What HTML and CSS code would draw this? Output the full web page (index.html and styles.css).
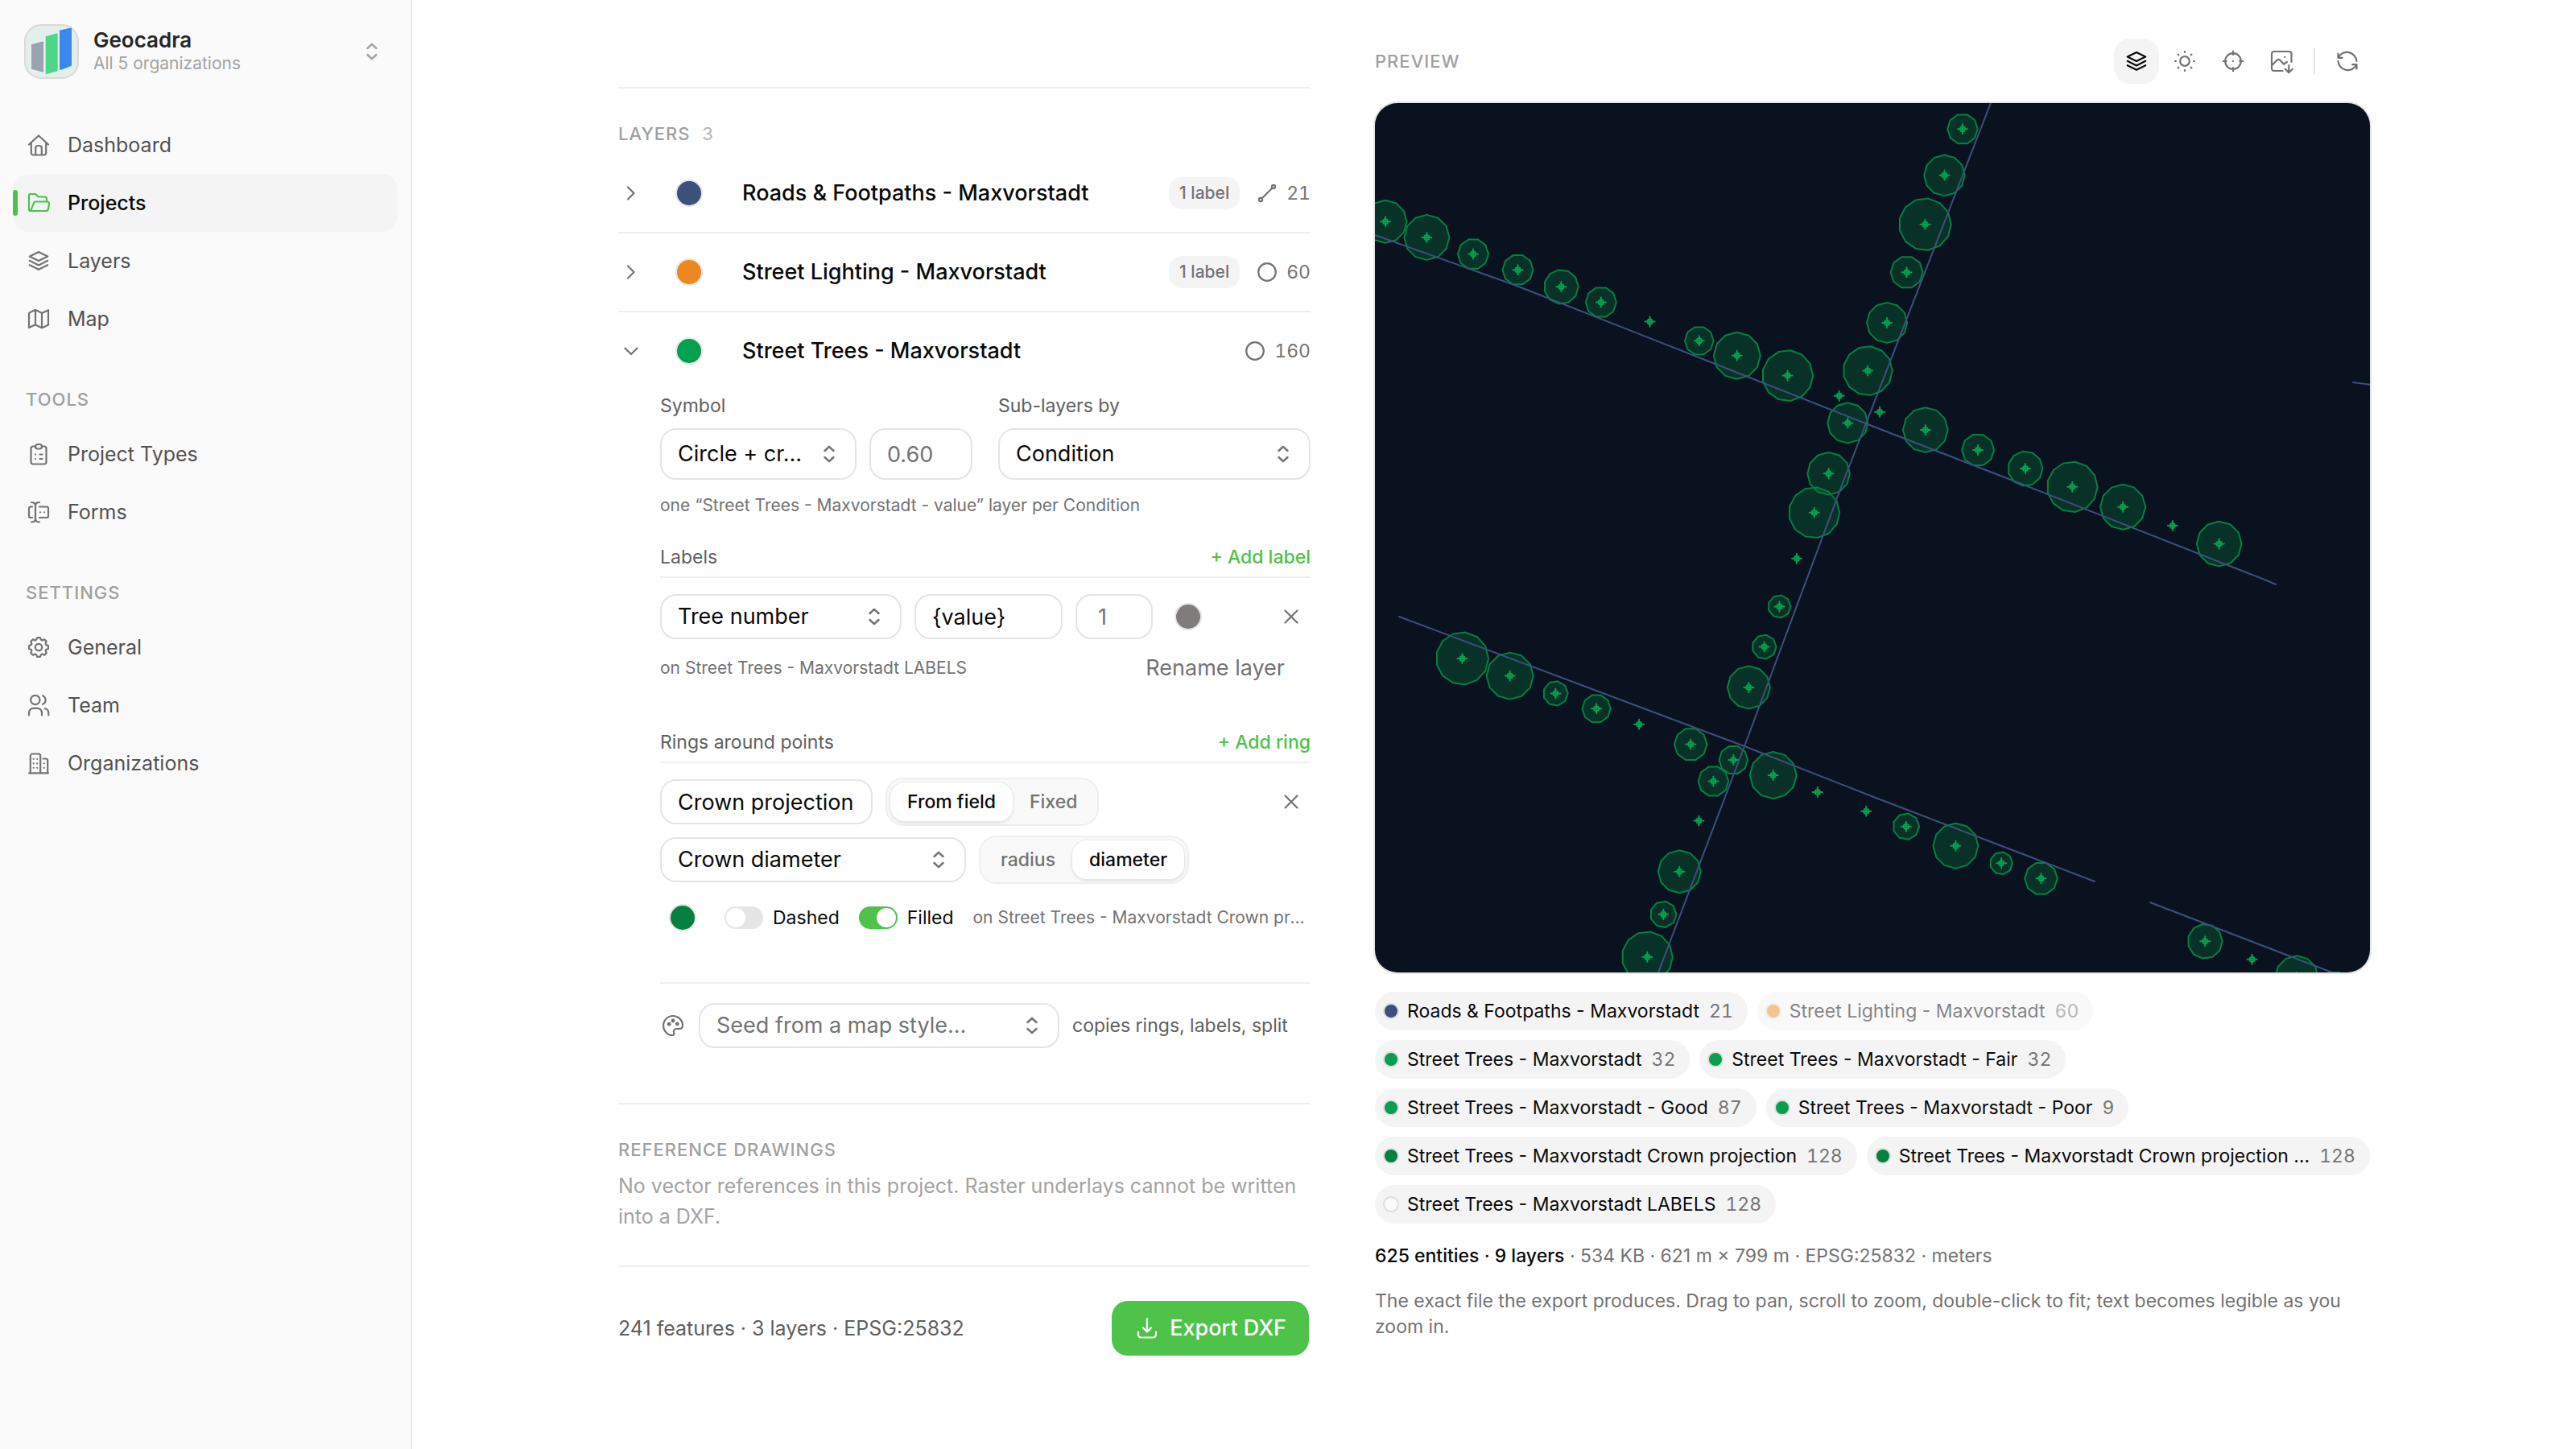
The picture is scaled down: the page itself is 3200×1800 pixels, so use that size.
FILE: index.html
```html
<!DOCTYPE html>
<html lang="en">
<head>
<meta charset="utf-8">
<meta name="viewport" content="width=device-width, initial-scale=1">
<title>Geocadra – Export DXF</title>
<link rel="stylesheet" href="styles.css">
</head>
<body>
<svg class="sprite" aria-hidden="true">
  <symbol id="updown" viewBox="0 0 24 24"><path d="M6.500 8 12 2.800 17.500 8M6.500 16 12 21.200 17.500 16"/></symbol>
  <symbol id="home" viewBox="0 0 32 32"><path d="M4 15.500 16 4.500 28 15.500M6.800 13.500V26a2.500 2.500 0 0 0 2.500 2.500h13.400a2.500 2.500 0 0 0 2.500-2.500V13.500M12.200 28.500V20a3 3 0 0 1 3-3h1.600a3 3 0 0 1 3 3v8.500"/></symbol>
  <symbol id="folder" viewBox="0 0 32 32"><path d="M6 26a2 2 0 0 1-2-2V7a2 2 0 0 1 2-2h5a3 3 0 0 1 2 .8L15.500 8.500H23a3 3 0 0 1 3 3v3M6.300 26 9.800 16.300A2.600 2.600 0 0 1 12.200 14.500H26.500a2.500 2.500 0 0 1 2.500 3l-1 6a3 3 0 0 1-3 2.500H6"/></symbol>
  <symbol id="layers" viewBox="0 0 32 32"><path d="M16 5 27.200 10.500 16 16 4.800 10.500ZM4.800 15.800 16 21.400 27.200 15.800M4.800 21.200 16 26.800 27.200 21.200"/></symbol>
  <symbol id="map" viewBox="0 0 32 32"><path d="M5 8.300 11 5.300a2 2 0 0 1 1.700 0l6.600 3.200a2 2 0 0 0 1.700 0L28 5.200V23.500L21 27a2 2 0 0 1-1.700 0l-6.600-3.200a2 2 0 0 0-1.700 0L4 27V9.500ZM12 5.500V23.500M20 8.800V27"/></symbol>
  <symbol id="clipboard" viewBox="0 0 32 32"><path d="M12 6.500H9A2.500 2.500 0 0 0 6.500 9v17A2.500 2.500 0 0 0 9 28.500h14A2.500 2.500 0 0 0 25.500 26V9A2.500 2.500 0 0 0 23 6.500h-3M17.500 16.500h3M17.500 22h3M12 16.500h.1M12 22h.1"/><rect x="12" y="4" width="8" height="5.500" rx="2.700"/></symbol>
  <symbol id="forms" viewBox="0 0 32 32"><path d="M7 4c3 0 5 1.500 5 4v16.500c0 2.500-2 4-5 4M17 4c-3 0-5 1.500-5 4M17 28.500c-3 0-5-1.500-5-4M8 9.500H6a2 2 0 0 0-2 2v9.500a2 2 0 0 0 2 2h2M17 9.500h9a2 2 0 0 1 2 2v9.500a2 2 0 0 1-2 2h-9M18 16.300h.1M23 16.300h.1"/></symbol>
  <symbol id="gear" viewBox="0 0 32 32"><path d="M27.900 17.900 25.200 19 24.600 20.400 25.700 23.100 23.100 25.700 20.400 24.600 19 25.200 17.900 27.900 14.100 27.900 13 25.200 11.600 24.600 8.900 25.700 6.300 23.100 7.400 20.400 6.800 19 4.100 17.900 4.100 14.100 6.800 13 7.400 11.600 6.300 8.900 8.900 6.300 11.600 7.400 13 6.800 14.100 4.100 17.900 4.100 19 6.800 20.400 7.400 23.100 6.300 25.700 8.900 24.600 11.600 25.200 13 27.900 14.100Z"/><circle cx="16" cy="16" r="4.200"/></symbol>
  <symbol id="team" viewBox="0 0 32 32"><circle cx="11.800" cy="9.500" r="5.700"/><path d="M21 4.200a5.700 5.700 0 0 1 0 10.600M4 28.500v-3.200a5.500 5.500 0 0 1 5.500-5.500h5a5.500 5.500 0 0 1 5.500 5.500v3.200M24 20.200a5.500 5.500 0 0 1 4.300 5.300v3"/></symbol>
  <symbol id="building" viewBox="0 0 32 32"><path d="M4 28.300h24M5.800 28V7a2.500 2.500 0 0 1 2.500-2.500h7.400a2.500 2.500 0 0 1 2.500 2.500V28M21.500 10.500h3.200A2.500 2.500 0 0 1 27.200 13v15M9.700 10.800h.1M14.100 10.800h.1M9.700 16.300h.1M14.100 16.300h.1M9.700 21.800h.1M14.100 21.800h.1M22.700 16.300h.1M22.700 21.800h.1"/></symbol>
  <symbol id="right" viewBox="0 0 32 32"><path d="M12 8.500 19.500 16 12 23.500"/></symbol>
  <symbol id="down" viewBox="0 0 32 32"><path d="M8.500 12.500 16 20l7.500-7.500"/></symbol>
  <symbol id="line" viewBox="0 0 32 32"><path d="M9.500 22.500 22.500 9.500"/><circle cx="8" cy="24" r="2.100"/><circle cx="24" cy="8" r="2.100"/></symbol>
  <symbol id="point" viewBox="0 0 32 32"><circle cx="16" cy="16" r="10.800"/></symbol>
  <symbol id="close" viewBox="0 0 32 32"><path d="M8.500 8.500l15 15M23.500 8.500l-15 15"/></symbol>
  <symbol id="palette" viewBox="0 0 32 32"><path d="M16 4A12 12 0 0 0 4 16c0 6.500 5 12 11.500 12 1.600 0 2.200-1.200 1.700-2.600-1-2.800.3-5.400 3.400-5.400h3.200c2.700 0 4.200-1.500 4.200-4C28 9 22.500 4 16 4Z"/><g class="filled"><circle cx="11.200" cy="14.200" r="2.400"/><circle cx="16" cy="10" r="2.400"/><circle cx="21.300" cy="13.800" r="2.400"/></g></symbol>
  <symbol id="sun" viewBox="0 0 32 32"><circle cx="16" cy="16" r="5.800"/><path d="M16 4v1M16 27v1M4 16h1M27 16h1M7.600 7.600l.7.700M23.700 23.700l.7.700M7.600 24.400l.7-.7M23.700 8.300l.7-.7"/></symbol>
  <symbol id="target" viewBox="0 0 32 32"><circle cx="16" cy="16" r="9.800"/><path d="M16 3.800v4M16 24.200v4M3.800 16h4M24.200 16h4M15.900 16h.2"/></symbol>
  <symbol id="image" viewBox="0 0 32 32"><path d="M17.500 28H7a3 3 0 0 1-3-3V7a3 3 0 0 1 3-3h18.500a3 3 0 0 1 3 3v10M4 21.500l6.500-6.700a2.600 2.600 0 0 1 3.800 0l5 5.200M19.300 19.500l3.700-2.500M20.300 10.800h.1M25.300 21v9M20.800 25.700l4.500 4.500 4.500-4.500"/></symbol>
  <symbol id="refresh" viewBox="0 0 32 32"><path d="M4.500 6.500v5.300h5.300M4.800 11.500A12 12 0 0 1 27.500 16M27.500 25.500v-5.300h-5.300M27.200 20.500A12 12 0 0 1 4.500 16"/></symbol>
  <symbol id="download" viewBox="0 0 32 32"><path d="M16 4v16M11 15.500l5 5 5-5M5 20.500V24a3.500 3.500 0 0 0 3.500 3.500h15A3.500 3.500 0 0 0 27 24v-3.500"/></symbol>
</svg>

<div class="app">
  <aside class="sidebar">
    <button class="brand" type="button">
      <svg class="logo" viewBox="0 0 68 68" aria-hidden="true">
        <rect x="1" y="1" width="66" height="66" rx="20" fill="#e4eeec" stroke="#dadada" stroke-width="2"/>
        <path fill="#9ba2b0" stroke="#9ba2b0" stroke-width="2" stroke-linejoin="round" d="M10 26 23 22.500V58.500L10 55Z"/>
        <path fill="#4fd586" stroke="#4fd586" stroke-width="2" stroke-linejoin="round" d="M27.700 16 40.700 12.500V57.500L27.700 61Z"/>
        <path fill="#3b88ec" stroke="#3b88ec" stroke-width="2" stroke-linejoin="round" d="M45 8.500 58 5.500V51L45 56Z"/>
      </svg>
      <span class="brand-text"><strong>Geocadra</strong><small>All 5 organizations</small></span>
      <svg class="icon-sm"><use href="#updown"/></svg>
    </button>
    <nav class="nav">
      <div class="nav-group">
        <a href="#dashboard"><svg class="icon"><use href="#home"/></svg>Dashboard</a>
        <a href="#projects" class="active" aria-current="page"><svg class="icon"><use href="#folder"/></svg>Projects</a>
        <a href="#layers-page"><svg class="icon"><use href="#layers"/></svg>Layers</a>
        <a href="#map-page"><svg class="icon"><use href="#map"/></svg>Map</a>
      </div>
      <div class="nav-group">
        <h2 class="eyebrow">TOOLS</h2>
        <a href="#types"><svg class="icon"><use href="#clipboard"/></svg>Project Types</a>
        <a href="#forms-page"><svg class="icon"><use href="#forms"/></svg>Forms</a>
      </div>
      <div class="nav-group">
        <h2 class="eyebrow">SETTINGS</h2>
        <a href="#general"><svg class="icon"><use href="#gear"/></svg>General</a>
        <a href="#team-page"><svg class="icon"><use href="#team"/></svg>Team</a>
        <a href="#organizations"><svg class="icon"><use href="#building"/></svg>Organizations</a>
      </div>
    </nav>
  </aside>

  <main class="main">
    <div class="columns">
      <form class="settings">
        <section class="section">
          <h2 class="eyebrow">LAYERS <span class="eyebrow-count">3</span></h2>
          <ul class="layer-list">
            <li>
              <div class="layer-row">
                <button class="icon-button" type="button" aria-label="Expand"><svg class="icon"><use href="#right"/></svg></button>
                <button class="swatch navy" type="button" aria-label="Color"></button>
                <span class="layer-name">Roads &amp; Footpaths - Maxvorstadt</span>
                <span class="badge">1 label</span>
                <svg class="icon"><use href="#line"/></svg>
                <span class="count">21</span>
              </div>
            </li>
            <li>
              <div class="layer-row">
                <button class="icon-button" type="button" aria-label="Expand"><svg class="icon"><use href="#right"/></svg></button>
                <button class="swatch orange" type="button" aria-label="Color"></button>
                <span class="layer-name">Street Lighting - Maxvorstadt</span>
                <span class="badge">1 label</span>
                <svg class="icon"><use href="#point"/></svg>
                <span class="count">60</span>
              </div>
            </li>
            <li>
              <div class="layer-row">
                <button class="icon-button" type="button" aria-label="Collapse"><svg class="icon"><use href="#down"/></svg></button>
                <button class="swatch green" type="button" aria-label="Color"></button>
                <span class="layer-name">Street Trees - Maxvorstadt</span>
                <svg class="icon"><use href="#point"/></svg>
                <span class="count">160</span>
              </div>
              <div class="layer-body">
                <div class="fields">
                  <div class="field">
                    <label for="symbol">Symbol</label>
                    <div class="field-inputs">
                      <span class="select tall grow"><select id="symbol"><option>Circle + cr…</option></select><svg class="icon-sm"><use href="#updown"/></svg></span>
                      <input class="input tall w-size" type="text" placeholder="0.60" aria-label="Symbol size">
                    </div>
                  </div>
                  <div class="field">
                    <label for="sublayers">Sub-layers by</label>
                    <span class="select tall"><select id="sublayers"><option>Condition</option></select><svg class="icon-sm"><use href="#updown"/></svg></span>
                  </div>
                </div>
                <p class="hint">one “Street Trees - Maxvorstadt - value” layer per Condition</p>

                <div class="group-head labels-head"><h3>Labels</h3><button class="link" type="button">+ Add label</button></div>
                <div class="rows">
                  <div class="row">
                    <span class="select w-label"><select aria-label="Label field"><option>Tree number</option></select><svg class="icon-sm"><use href="#updown"/></svg></span>
                    <input class="input w-format" type="text" value="{value}" aria-label="Label format">
                    <input class="input w-height" type="text" placeholder="1" aria-label="Label height">
                    <button class="swatch gray" type="button" aria-label="Label color"></button>
                    <button class="icon-button remove" type="button" aria-label="Remove label"><svg class="icon"><use href="#close"/></svg></button>
                  </div>
                  <div class="row row-note">
                    <p class="hint">on Street Trees - Maxvorstadt LABELS</p>
                    <button class="rename" type="button">Rename layer</button>
                  </div>
                </div>

                <div class="group-head rings-head"><h3>Rings around points</h3><button class="link" type="button">+ Add ring</button></div>
                <div class="rows">
                  <div class="row">
                    <input class="input w-ring" type="text" value="Crown projection" aria-label="Ring name">
                    <div class="segmented" role="radiogroup" aria-label="Ring source">
                      <label><input type="radio" name="source" checked>From field</label>
                      <label><input type="radio" name="source">Fixed</label>
                    </div>
                    <button class="icon-button remove" type="button" aria-label="Remove ring"><svg class="icon"><use href="#close"/></svg></button>
                  </div>
                  <div class="row">
                    <span class="select w-field"><select aria-label="Ring field"><option>Crown diameter</option></select><svg class="icon-sm"><use href="#updown"/></svg></span>
                    <div class="segmented" role="radiogroup" aria-label="Field meaning">
                      <label><input type="radio" name="meaning">radius</label>
                      <label><input type="radio" name="meaning" checked>diameter</label>
                    </div>
                  </div>
                  <div class="row row-options">
                    <button class="swatch forest" type="button" aria-label="Ring color"></button>
                    <label class="switch"><input type="checkbox">Dashed</label>
                    <label class="switch"><input type="checkbox" checked>Filled</label>
                    <p class="hint truncate">on Street Trees - Maxvorstadt Crown projection</p>
                  </div>
                </div>

                <div class="seed">
                  <svg class="icon"><use href="#palette"/></svg>
                  <span class="select w-seed muted"><select aria-label="Map style"><option>Seed from a map style…</option></select><svg class="icon-sm"><use href="#updown"/></svg></span>
                  <span class="seed-note">copies rings, labels, split</span>
                </div>
              </div>
            </li>
          </ul>
        </section>

        <section class="section references">
          <h2 class="eyebrow">REFERENCE DRAWINGS</h2>
          <p>No vector references in this project. Raster underlays cannot be written into a DXF.</p>
        </section>

        <footer class="export">
          <span>241 features · 3 layers · EPSG:25832</span>
          <button class="primary" type="submit"><svg class="icon"><use href="#download"/></svg>Export DXF</button>
        </footer>
      </form>

      <section class="preview">
        <header class="preview-head">
          <h2 class="eyebrow">PREVIEW</h2>
          <div class="toolbar">
            <button class="tool on" type="button" aria-label="Layers"><svg class="icon"><use href="#layers"/></svg></button>
            <button class="tool" type="button" aria-label="Background"><svg class="icon"><use href="#sun"/></svg></button>
            <button class="tool" type="button" aria-label="Fit"><svg class="icon"><use href="#target"/></svg></button>
            <button class="tool" type="button" aria-label="Save image"><svg class="icon"><use href="#image"/></svg></button>
            <span class="divider"></span>
            <button class="tool" type="button" aria-label="Refresh"><svg class="icon"><use href="#refresh"/></svg></button>
          </div>
        </header>
        <svg class="drawing" id="drawing" viewBox="1708 128 1236 1080" preserveAspectRatio="xMidYMid slice" role="img" aria-label="Drawing preview"></svg>
        <ul class="legend">
          <li><button class="chip" type="button"><i class="navy"></i><span>Roads &amp; Footpaths - Maxvorstadt</span><b>21</b></button></li>
          <li><button class="chip off" type="button"><i class="orange"></i><span>Street Lighting - Maxvorstadt</span><b>60</b></button></li>
          <li><button class="chip" type="button"><i class="green"></i><span>Street Trees - Maxvorstadt</span><b>32</b></button></li>
          <li><button class="chip" type="button"><i class="green"></i><span>Street Trees - Maxvorstadt - Fair</span><b>32</b></button></li>
          <li><button class="chip" type="button"><i class="green"></i><span>Street Trees - Maxvorstadt - Good</span><b>87</b></button></li>
          <li><button class="chip" type="button"><i class="green"></i><span>Street Trees - Maxvorstadt - Poor</span><b>9</b></button></li>
          <li><button class="chip" type="button"><i class="forest"></i><span>Street Trees - Maxvorstadt Crown projection</span><b>128</b></button></li>
          <li><button class="chip long" type="button"><i class="forest"></i><span>Street Trees - Maxvorstadt Crown projection …</span><b>128</b></button></li>
          <li><button class="chip" type="button"><i class="white"></i><span>Street Trees - Maxvorstadt LABELS</span><b>128</b></button></li>
        </ul>
        <p class="summary"><strong>625 entities · 9 layers</strong> · 534 KB · 621 m × 799 m · EPSG:25832 · meters</p>
        <p class="footnote">The exact file the export produces. Drag to pan, scroll to zoom, double-click to fit; text becomes legible as you zoom in.</p>
      </section>
    </div>
  </main>
</div>
<script src="preview.js"></script>
</body>
</html>
```
FILE: styles.css
```css
* { box-sizing: border-box; margin: 0; padding: 0; }

body {
  font-family: Inter, "Liberation Sans", sans-serif;
  font-size: 25px;
  line-height: 32px;
  color: #0a0a0a;
  background: #fff;
}

button, input, select { font: inherit; color: inherit; border: 0; background: none; }
ul { list-style: none; }
svg { fill: none; stroke: currentColor; stroke-width: 2.2; stroke-linecap: round; stroke-linejoin: round; flex: none; }
.filled { fill: currentColor; stroke: none; }
.sprite { display: none; }
.icon { width: 32px; height: 32px; color: #737373; }
.icon-sm { width: 24px; height: 24px; color: #737373; stroke-width: 2.5; }

.navy { --dot: #3c507d; }
.orange { --dot: #ec8820; }
.green { --dot: #04a04f; }
.forest { --dot: #048040; }
.gray { --dot: #807c7c; }
.white { --dot: #fafafa; }

.eyebrow { font-size: 22px; line-height: 32px; font-weight: 500; letter-spacing: 1px; color: #a0a0a0; }
.eyebrow-count { margin-left: 8px; font-weight: 400; color: #b5b5b5; }

/* Shell */
.app { display: grid; grid-template-columns: 512px minmax(0, 1fr); min-height: 100vh; }
.sidebar { background: #fafafa; border-right: 2px solid #ececec; }

.brand { display: flex; align-items: center; gap: 18px; width: 100%; padding: 30px 36px 46px 30px; text-align: left; }
.logo { width: 68px; height: 68px; stroke: none; }
.brand-text { display: flex; flex-direction: column; flex: 1; }
.brand-text strong { font-size: 26px; line-height: 30px; font-weight: 600; color: #262626; }
.brand-text small { font-size: 21px; line-height: 28px; color: #a3a3a3; }
.brand .icon-sm { color: #a3a3a3; }

.nav { display: flex; flex-direction: column; gap: 40px; padding: 0 16px; }
.nav-group { display: flex; flex-direction: column; }
.nav .eyebrow { padding: 8px 16px 16px; }
.nav a { position: relative; display: flex; align-items: center; gap: 20px; height: 72px; padding: 0 16px; border-radius: 20px; color: #525252; text-decoration: none; }
.nav a.active { background: #f4f4f4; color: #0a0a0a; font-weight: 500; }
.nav a.active .icon { color: #4fc24a; }
.nav a.active::before { content: ""; position: absolute; left: 0; top: 20px; width: 6px; height: 32px; border-radius: 3px; background: #4fc24a; }

.main { min-width: 0; padding: 0 48px; }
.columns { display: grid; grid-template-columns: minmax(0, 215fr) minmax(0, 309fr); gap: 80px; max-width: 2176px; margin: 0 auto; }

/* Settings column */
.settings { padding-top: 108px; }
.section { border-top: 2px solid #efefef; padding-top: 40px; }
.layer-list { padding: 10px 0 68px; }
.layer-list li + li { border-top: 2px solid #efefef; }
.layer-row { display: flex; align-items: center; height: 96px; }
.layer-name { flex: 1; padding-left: 38px; font-size: 27px; font-weight: 500; }
.icon-button { display: flex; cursor: pointer; }
.swatch { display: flex; align-items: center; justify-content: center; width: 56px; height: 56px; }
.swatch::before { content: ""; width: 30px; height: 30px; border-radius: 50%; border: 2px solid #e5e5e5; background: var(--dot); }
.layer-row .swatch { margin-left: 28px; }
.badge { height: 40px; padding: 0 13px; margin-right: 18px; border-radius: 16px; background: #f4f4f4; color: #737373; font-size: 21px; line-height: 40px; font-weight: 500; }
.count { padding-left: 8px; font-size: 23px; font-variant-numeric: tabular-nums; color: #737373; }

.layer-body { padding: 4px 0 0 52px; }
.fields { display: grid; grid-template-columns: 1fr 1fr; gap: 32px; }
.field { display: flex; flex-direction: column; gap: 12px; min-width: 0; }
.field label, .group-head h3 { font-size: 23px; font-weight: 400; color: #606060; }
.field-inputs { display: flex; gap: 16px; }
.grow { flex: 1; min-width: 0; }

.select { display: grid; align-items: center; }
.select > * { grid-area: 1 / 1; }
.select .icon-sm { justify-self: end; margin-right: 22px; pointer-events: none; }
.select select, .input { width: 100%; height: 56px; padding: 0 20px; border: 2px solid #e5e5e5; border-radius: 20px; background: #fff; font-size: 27px; outline: 0; }
.select select { appearance: none; padding-right: 52px; }
.select.tall select, .input.tall { height: 64px; }
.select.muted select, .input::placeholder { color: #737373; }
.input.w-size { width: 128px; flex: none; }
.w-label { width: 300px; }
.input.w-format { width: 184px; }
.input.w-height { width: 96px; padding-left: 26px; }
.input.w-ring { width: 264px; }
.w-field { width: 380px; }
.w-seed { width: 448px; }

.hint { font-size: 21px; color: #737373; }
.fields + .hint { margin-top: 16px; }
.truncate { flex: 1; min-width: 0; overflow: hidden; white-space: nowrap; text-overflow: ellipsis; }

.group-head { display: flex; justify-content: space-between; padding-bottom: 8px; border-bottom: 2px solid #efefef; margin-bottom: 18px; }
.labels-head { margin-top: 32px; }
.rings-head { margin-top: 54px; }
.link { font-size: 23px; font-weight: 500; color: #4fc24a; }
.rows { display: flex; flex-direction: column; gap: 12px; }
.row { display: flex; align-items: center; gap: 16px; height: 60px; }
.row-note { height: 44px; justify-content: space-between; }
.rename { padding-right: 32px; font-size: 27px; color: #737373; }
.remove { margin-left: auto; padding: 8px; }
.row-options { gap: 24px; }

.segmented { display: flex; padding: 4px; border: 2px solid #efefef; border-radius: 22px; background: #f9f9f9; }
.segmented label { display: flex; align-items: center; height: 48px; padding: 0 21px; border-radius: 18px; font-size: 23px; font-weight: 500; color: #737373; }
.segmented input { appearance: none; width: 0; height: 0; }
.segmented label:has(:checked) { background: #fff; color: #0a0a0a; box-shadow: 0 0 0 1px #e8e8e8, 0 2px 4px #0000001f; }

.switch { display: flex; align-items: center; gap: 12px; font-size: 23px; }
.switch input { appearance: none; display: flex; width: 48px; height: 28px; padding: 2px; border-radius: 14px; background: #e5e5e5; }
.switch input::before { content: ""; width: 24px; height: 24px; border-radius: 50%; background: #fff; }
.switch input:checked { justify-content: flex-end; background: #4fc24a; }

.seed { display: flex; align-items: center; gap: 16px; margin-top: 50px; padding-top: 24px; border-top: 2px solid #efefef; }
.seed-note { font-size: 23px; color: #606060; }

.references { padding-bottom: 42px; }
.references p { margin-top: 10px; line-height: 38px; color: #a3a3a3; }
.export { display: flex; align-items: center; justify-content: space-between; padding: 42px 2px 48px 0; border-top: 2px solid #efefef; color: #606060; }
.primary { display: flex; align-items: center; gap: 12px; height: 68px; padding: 0 28px; border-radius: 20px; background: #4fc24a; color: #fff; font-size: 27px; font-weight: 500; }
.primary .icon { color: #fff; }

/* Preview column */
.preview { padding-top: 48px; }
.preview-head { display: flex; align-items: center; justify-content: space-between; height: 56px; }
.toolbar { display: flex; align-items: center; gap: 4px; }
.tool { display: flex; align-items: center; justify-content: center; width: 56px; height: 56px; border-radius: 20px; }
.tool.on { background: #f4f4f4; }
.tool.on .icon { color: #0a0a0a; }
.divider { width: 2px; height: 32px; margin: 0 8px; background: #e5e5e5; }

.drawing { display: block; width: 100%; margin-top: 24px; aspect-ratio: 103 / 90; border-radius: 28px; background: #0b121f; box-shadow: 0 0 0 2px #e5e5e5; stroke-width: 2; }
.road { stroke: #3c507d; }
.ring { stroke: #048040; fill: #048040; fill-opacity: .28; }
.tree { stroke: #04a04f; }

.legend { display: flex; flex-wrap: wrap; gap: 12px; margin-top: 24px; }
.chip { display: flex; align-items: center; height: 48px; padding: 0 18px 0 10px; border-radius: 24px; background: #f4f4f4; font-size: 23px; white-space: nowrap; }
.chip i { width: 20px; height: 20px; margin-right: 10px; border: 2px solid #dcdcdc; border-radius: 50%; background: var(--dot); }
.chip b { margin-left: 12px; font-weight: 400; font-variant-numeric: tabular-nums; color: #737373; }
.chip.off { opacity: .5; }
.chip.long span { min-width: 510px; }

.summary { margin-top: 24px; font-size: 23px; color: #737373; }
.summary strong { font-weight: 500; color: #0a0a0a; }
.footnote { margin-top: 24px; font-size: 23px; color: #737373; }
```
FILE: preview.js
```js
// Street centrelines: flat lists of x, y.
const roads = [
  [1708, 292, 1884, 355, 2128, 451, 2320, 527, 2516, 603, 2818, 722, 2827, 726],
  [2473, 128, 2320, 521, 2289, 600, 2167, 927, 2060, 1208],
  [1738, 766, 2167, 927, 2330, 991, 2602, 1095],
  [2671, 1121, 2897, 1208],
  [2923, 475, 2945, 478]
];

// Trees: x, y and crown radius (0 where no crown was recorded).
const trees = [
  [1721, 275.3, 26.5], [1772.4, 294.9, 28], [1830, 315.6, 19], [1885.5, 335.2, 19], [1939.4, 356.3, 21.3],
  [1988.8, 375.5, 19], [2049.6, 399.6, 0], [2110.8, 423.3, 17.8], [2157.8, 441.8, 29], [2220.6, 466.6, 31.5],
  [2284.7, 491.7, 0], [2295.3, 525.4, 25], [2271.6, 588.3, 26.3], [2320.2, 460.6, 30.5], [2438, 160.3, 18.8],
  [2415.5, 217.8, 25.3], [2391.4, 278.7, 32.3], [2368.6, 338.2, 20], [2344.1, 400.9, 25], [2335.1, 511.8, 0],
  [2391.8, 534, 27.8], [2457.1, 559, 20], [2515.9, 582.1, 21.5], [2574.3, 604.8, 31.3], [2637.1, 629.8, 28],
  [2698.8, 652.9, 0], [2756.7, 675.6, 27.8], [2253.7, 636.8, 31.5], [2232, 693.7, 0], [2210.4, 753.4, 14],
  [2191.6, 803.6, 15], [2172.4, 853.9, 26.5], [1816.5, 817.9, 32.5], [1875.7, 839.6, 29], [1932.4, 861.4, 15.3],
  [1983.1, 880.3, 17.6], [2036.1, 899.7, 0], [2100.2, 924.6, 20.3], [2153.3, 944, 17.8], [2128.4, 970.5, 18.8],
  [2202.7, 963, 29], [2257.8, 983.9, 0], [2318.2, 1007.7, 0], [2110.4, 1019.5, 0], [2086.3, 1082.8, 26.5],
  [2066.3, 1135.8, 16.3], [2046.3, 1188.8, 31.5], [2367.8, 1026.7, 16.3], [2429.4, 1050.7, 28], [2486.1, 1072.3, 14],
  [2535.5, 1091.3, 20.3], [2739.2, 1169.3, 21.5], [2797.6, 1191.7, 0], [2853, 1214, 26.7], [2900, 1226, 19]
];

// Small circles are tessellated with fewer segments.
function segments(r) {
  if (r < 17) return 9;
  if (r < 21) return 10;
  if (r < 24) return 11;
  return r < 30 ? 12 : 13;
}

function ring([x, y, r]) {
  const n = segments(r);
  const points = Array.from({ length: n }, (_, i) => {
    const a = (i / n) * 2 * Math.PI;
    return (x + r * Math.cos(a)).toFixed(1) + "," + (y - r * Math.sin(a)).toFixed(1);
  });
  return `<polygon class="ring" points="${points.join(" ")}"/>`;
}

function tree([x, y]) {
  return `<g class="tree"><circle cx="${x}" cy="${y}" r="3"/><path d="M${x - 6} ${y}h12M${x} ${y - 6}v12"/></g>`;
}

document.getElementById("drawing").innerHTML =
  trees.filter((t) => t[2]).map(ring).join("") +
  roads.map((r) => `<polyline class="road" points="${r.join(" ")}"/>`).join("") +
  trees.map(tree).join("");
```
